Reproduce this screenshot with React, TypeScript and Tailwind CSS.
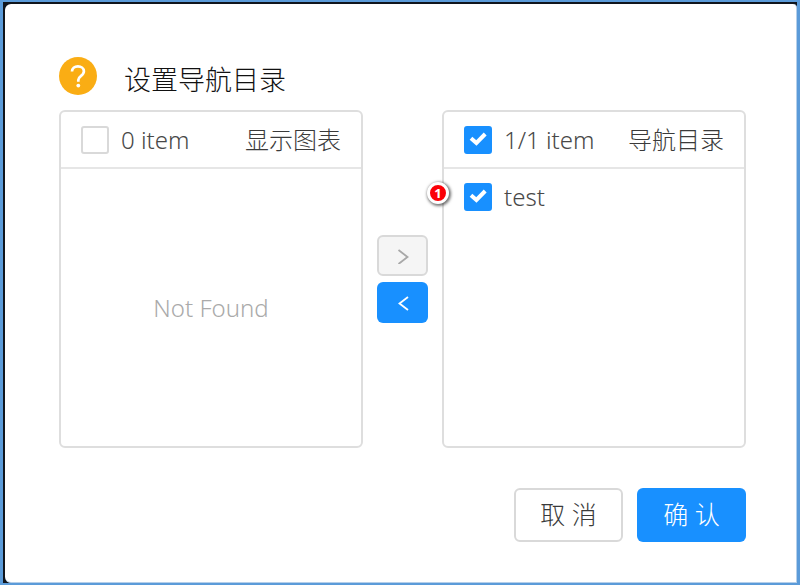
import { useId, useState } from "react";
import type { ReactNode } from "react";

function CheckBox({ label, defaultChecked = false }: { label: ReactNode; defaultChecked?: boolean }) {
  const id = useId();
  return (
    <div className="flex items-center gap-3">
      <span className="grid size-7">
        <input
          id={id}
          type="checkbox"
          defaultChecked={defaultChecked}
          className="peer col-start-1 row-start-1 size-7 appearance-none rounded-[3px] border-2 border-[#d9d9d9] bg-white checked:border-[#1890ff] checked:bg-[#1890ff]"
        />
        <svg
          viewBox="0 0 28 28"
          className="pointer-events-none invisible col-start-1 row-start-1 size-7 peer-checked:visible"
          fill="none"
          stroke="#fff"
          strokeWidth="4"
          aria-hidden="true"
        >
          <path d="M7 12.2 L12.4 17 L21.2 8" />
        </svg>
      </span>
      <label htmlFor={id} className="text-2xl whitespace-nowrap text-[#484848]">
        {label}
      </label>
    </div>
  );
}

function Panel({ count, title, checked, children }: { count: string; title: string; checked?: boolean; children: ReactNode }) {
  return (
    <section className="flex min-h-[338px] min-w-0 flex-1 flex-col rounded-md border-2 border-[#dedede]">
      <header className="flex h-[57px] items-center justify-between border-b-2 border-[#e6e6e6] px-5">
        <CheckBox label={count} defaultChecked={checked} />
        <h2 className="text-2xl font-light whitespace-nowrap text-[#3a3a3a]">{title}</h2>
      </header>
      {children}
    </section>
  );
}

export default function App() {
  const [step] = useState(1);
  return (
    <div className="flex min-h-screen border-2 border-x-[3px] border-[#5b9bd9] bg-[#10151c] pt-[2px] pl-[2px] font-['Noto_Sans','Noto_Sans_CJK_SC',sans-serif] font-light">
      <main role="dialog" aria-labelledby="dialog-title" className="flex flex-1 flex-col rounded-l-md rounded-tr-sm border-r border-b border-[#b5cfea] bg-white px-[54px] pt-[53px] pr-[50px] pb-10">
        <div className="flex h-[53px] items-start gap-[27px]">
          <svg viewBox="0 0 38 38" className="size-[38px]" aria-hidden="true">
            <circle cx="19" cy="19" r="19" fill="#faad14" />
            <path d="M13 14.6c0-3.2 2.5-5.2 5.9-5.2s6 2 6 4.8c0 2.3-1.4 3.6-3.1 4.9-1.7 1.2-2.5 2.1-2.5 3.9v1.8" fill="none" stroke="#fff" strokeWidth="2.7" />
            <circle cx="19.3" cy="28.6" r="1.9" fill="#fff" />
          </svg>
          <h1 id="dialog-title" className="pt-1 text-[27px] leading-[38px] text-[#111]">设置导航目录</h1>
        </div>

        <div className="flex items-center gap-[14px]">
          <Panel count="0 item" title="显示图表">
            <p className="flex flex-1 items-center justify-center text-2xl text-[#aaa]">Not Found</p>
          </Panel>

          <div className="flex w-[51px] flex-col gap-[6px]">
            <button type="button" disabled aria-label="Move right" className="flex h-[41px] items-center justify-center rounded-md border-2 border-[#d9d9d9] bg-[#f5f5f5] text-[#a8a8a8]">
              <svg viewBox="0 0 16 16" className="size-4" fill="none" stroke="currentColor" strokeWidth="1.8" aria-hidden="true">
                <path d="M3.5 2 L12.5 9 L3.5 16" />
              </svg>
            </button>
            <button type="button" aria-label="Move left" className="flex h-[41px] items-center justify-center rounded-md bg-[#1890ff] text-white">
              <svg viewBox="0 0 16 16" className="size-4" fill="none" stroke="currentColor" strokeWidth="1.8" aria-hidden="true">
                <path d="M13 2 L4.5 8.5 L13 15" />
              </svg>
            </button>
          </div>

          <Panel count="1/1 item" title="导航目录" checked>
            <ul className="relative px-5">
              <li className="flex h-14 items-center">
                <CheckBox label="test" defaultChecked />
              </li>
              <li aria-hidden="true" className="absolute top-[13px] -left-[17px] flex size-[22px] items-center justify-center rounded-full border-[3px] border-white bg-[#fb0007] text-[13px] leading-none font-bold text-white shadow-[1px_1px_3px_1px_rgba(0,0,0,0.55)]">
                {step}
              </li>
            </ul>
          </Panel>
        </div>

        <footer className="mt-10 flex justify-end gap-[14px] text-[25px]">
          <button type="button" className="h-[54px] w-[109px] rounded-md border-2 border-[#d9d9d9] bg-white text-[#3a3a3a]">取 消</button>
          <button type="button" className="h-[54px] w-[109px] rounded-md bg-[#1890ff] text-white">确 认</button>
        </footer>
      </main>
    </div>
  );
}
